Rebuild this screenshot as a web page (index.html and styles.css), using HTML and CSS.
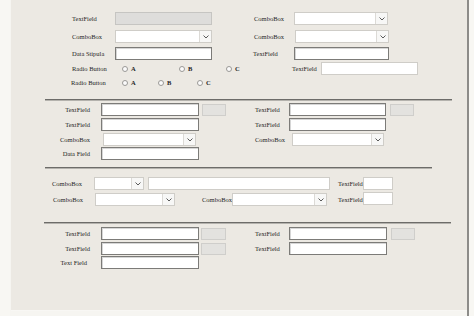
FILE: index.html
```html
<!DOCTYPE html>
<html lang="en">
<head>
    <meta charset="UTF-8">
    <title>Form Layout</title>
    <link rel="stylesheet" href="styles.css">
</head>
<body>
    <div class="frame">
        <div class="panel">

            <!-- top block -->
            <div class="row s1 mt12">
                <span class="lbl w43">TextField</span>
                <span class="field disabled w97"></span>
                <span class="lbl w40 ml42">ComboBox</span>
                <span class="combo w94"><span class="arrow"><svg width="6" height="4" viewBox="0 0 6 4"><polyline points="0.5,0.5 3,3 5.5,0.5"/></svg></span></span>
            </div>
            <div class="row s1 mt5">
                <span class="lbl w43">ComboBox</span>
                <span class="combo w97"><span class="arrow"><svg width="6" height="4" viewBox="0 0 6 4"><polyline points="0.5,0.5 3,3 5.5,0.5"/></svg></span></span>
                <span class="lbl w41 ml42">ComboBox</span>
                <span class="combo w94"><span class="arrow"><svg width="6" height="4" viewBox="0 0 6 4"><polyline points="0.5,0.5 3,3 5.5,0.5"/></svg></span></span>
            </div>
            <div class="row s1 mt4">
                <span class="lbl w43">Data Stipula</span>
                <span class="field dark w97"></span>
                <span class="lbl w41 ml41">TextField</span>
                <span class="field dark w95"></span>
            </div>
            <div class="row s1 mt2">
                <span class="lbl w50">Radio Button</span>
                <span class="radio w57"><i></i>A</span>
                <span class="radio w47"><i></i>B</span>
                <span class="radio w66"><i></i>C</span>
                <span class="lbl w29">TextField</span>
                <span class="field w97"></span>
            </div>
            <div class="row s1b mt1">
                <span class="lbl w51">Radio Button</span>
                <span class="radio w36"><i></i>A</span>
                <span class="radio w39"><i></i>B</span>
                <span class="radio w36"><i></i>C</span>
            </div>

            <hr class="sep sep1">

            <!-- second block -->
            <div class="row s2 mt2">
                <span class="lbl right w40">TextField</span>
                <span class="field dark w98 ml11"></span>
                <span class="btn ml3"></span>
                <span class="lbl w34 ml29">TextField</span>
                <span class="field dark w97"></span>
                <span class="btn ml4"></span>
            </div>
            <div class="row s2 mt2">
                <span class="lbl right w40">TextField</span>
                <span class="field dark w98 ml11"></span>
                <span class="lbl w34 ml56">TextField</span>
                <span class="field dark w97"></span>
            </div>
            <div class="row s2 mt2">
                <span class="lbl right w40">ComboBox</span>
                <span class="combo w93 ml13"><span class="arrow"><svg width="6" height="4" viewBox="0 0 6 4"><polyline points="0.5,0.5 3,3 5.5,0.5"/></svg></span></span>
                <span class="lbl w37 ml59">ComboBox</span>
                <span class="combo w92"><span class="arrow"><svg width="6" height="4" viewBox="0 0 6 4"><polyline points="0.5,0.5 3,3 5.5,0.5"/></svg></span></span>
            </div>
            <div class="row s2 mt1">
                <span class="lbl right w40">Data Field</span>
                <span class="field dark w98 ml11"></span>
            </div>

            <hr class="sep sep2">

            <!-- third block -->
            <div class="row s3 mt8">
                <span class="lbl w42">ComboBox</span>
                <span class="combo w50"><span class="arrow"><svg width="6" height="4" viewBox="0 0 6 4"><polyline points="0.5,0.5 3,3 5.5,0.5"/></svg></span></span>
                <span class="field w182 ml4"></span>
                <span class="lbl w25 ml8">TextField</span>
                <span class="field w30"></span>
            </div>
            <div class="row s3b mt3">
                <span class="lbl w42">ComboBox</span>
                <span class="combo w80"><span class="arrow"><svg width="6" height="4" viewBox="0 0 6 4"><polyline points="0.5,0.5 3,3 5.5,0.5"/></svg></span></span>
                <span class="lbl w30 ml27">ComboBox</span>
                <span class="combo w95"><span class="arrow"><svg width="6" height="4" viewBox="0 0 6 4"><polyline points="0.5,0.5 3,3 5.5,0.5"/></svg></span></span>
                <span class="lbl w25 ml11">TextField</span>
                <span class="field w30 up"></span>
            </div>

            <hr class="sep sep3">

            <!-- fourth block -->
            <div class="row s2 mt3">
                <span class="lbl right w40">TextField</span>
                <span class="field dark w98 ml11"></span>
                <span class="btn w25 ml2"></span>
                <span class="lbl w34 ml29">TextField</span>
                <span class="field dark w98"></span>
                <span class="btn ml4"></span>
            </div>
            <div class="row s2 mt2">
                <span class="lbl right w40">TextField</span>
                <span class="field dark w98 ml11"></span>
                <span class="btn w25 ml2"></span>
                <span class="lbl w34 ml29">TextField</span>
                <span class="field dark w98"></span>
            </div>
            <div class="row s2 mt1">
                <span class="lbl right w37">Text Field</span>
                <span class="field dark w98 ml14"></span>
            </div>

        </div>
    </div>
</body>
</html>
```

FILE: styles.css
```css
* {
    box-sizing: border-box;
}

body {
    margin: 0;
    background-color: #f8f7f3;
    font-family: 'Liberation Serif', 'Times New Roman', serif;
    color: #262626;
}

.frame {
    margin-left: 10px;
    width: 459px;
    height: 316px;
    border-left: 1px solid #f6f5f1;
    border-right: 2px solid #8d8c89;
    background-color: #f6f5f1;
}

.panel {
    height: 311px;
    background-color: #ece9e3;
    border-bottom: 1px solid #f8f7f4;
    overflow: hidden;
    padding-top: 0.1px;
}

.row {
    display: flex;
    align-items: center;
    height: 13px;
}

/* left offsets for each block */
.s1 { padding-left: 61px; }
.s1b { padding-left: 60px; }
.s2 { padding-left: 39px; }
.s3 { padding-left: 41px; }
.s3b { padding-left: 42px; }

.lbl {
    font-size: 6.5px;
    line-height: 13px;
    white-space: nowrap;
    flex: none;
}

.lbl.right {
    text-align: right;
}

.field,
.combo,
.btn {
    flex: none;
    height: 13px;
    background-color: #fff;
    border: 1px solid #cfcdc8;
}

.field.dark {
    border-color: #7c7b78;
    box-shadow: inset 1px 1px 0 #d6d6d6;
}

.field.disabled {
    background-color: #dedddb;
    border-color: #c6c5c2;
}

.field.up {
    margin-top: -3px;
}

.combo {
    display: flex;
    justify-content: flex-end;
}

.arrow {
    width: 12px;
    height: 100%;
    border-left: 1px solid #dcdad6;
    background-color: #f7f7f6;
    display: flex;
    align-items: center;
    justify-content: center;
}

.arrow polyline {
    fill: none;
    stroke: #5a5a5a;
    stroke-width: 1;
}

.btn {
    width: 24px;
    height: 12px;
    background-color: #e3e2df;
    border-color: #cfcecb;
}

.radio {
    flex: none;
    display: flex;
    align-items: center;
    font-size: 6.5px;
    font-weight: bold;
    line-height: 13px;
}

.radio i {
    width: 6px;
    height: 6px;
    border: 1px solid #9a9996;
    border-radius: 50%;
    background-color: #fbfbfb;
    margin-right: 3px;
}

.sep {
    margin: 0;
    height: 2px;
    border: 0;
    border-top: 1px solid #6d6c69;
    border-bottom: 1px solid #b4b2ad;
}

.sep1 { margin: 10px 0 0 34px; width: 407px; }
.sep2 { margin: 7px 0 0 34px; width: 387px; }
.sep3 { margin: 16px 0 0 33px; width: 407px; }

/* widths */
.w25 { width: 25px; }
.w29 { width: 29px; }
.w30 { width: 30px; }
.w34 { width: 34px; }
.w36 { width: 36px; }
.w37 { width: 37px; }
.w39 { width: 39px; }
.w40 { width: 40px; }
.w41 { width: 41px; }
.w42 { width: 42px; }
.w43 { width: 43px; }
.w47 { width: 47px; }
.w50 { width: 50px; }
.w51 { width: 51px; }
.w57 { width: 57px; }
.w66 { width: 66px; }
.w80 { width: 80px; }
.w92 { width: 92px; }
.w93 { width: 93px; }
.w94 { width: 94px; }
.w95 { width: 95px; }
.w97 { width: 97px; }
.w98 { width: 98px; }
.w182 { width: 182px; }

/* spacing */
.ml2 { margin-left: 2px; }
.ml3 { margin-left: 3px; }
.ml4 { margin-left: 4px; }
.ml8 { margin-left: 8px; }
.ml11 { margin-left: 11px; }
.ml13 { margin-left: 13px; }
.ml14 { margin-left: 14px; }
.ml27 { margin-left: 27px; }
.ml29 { margin-left: 29px; }
.ml41 { margin-left: 41px; }
.ml42 { margin-left: 42px; }
.ml56 { margin-left: 56px; }
.ml59 { margin-left: 59px; }

.mt1 { margin-top: 1px; }
.mt2 { margin-top: 2px; }
.mt3 { margin-top: 3px; }
.mt4 { margin-top: 4px; }
.mt5 { margin-top: 5px; }
.mt8 { margin-top: 8px; }
.mt12 { margin-top: 12px; }
```
